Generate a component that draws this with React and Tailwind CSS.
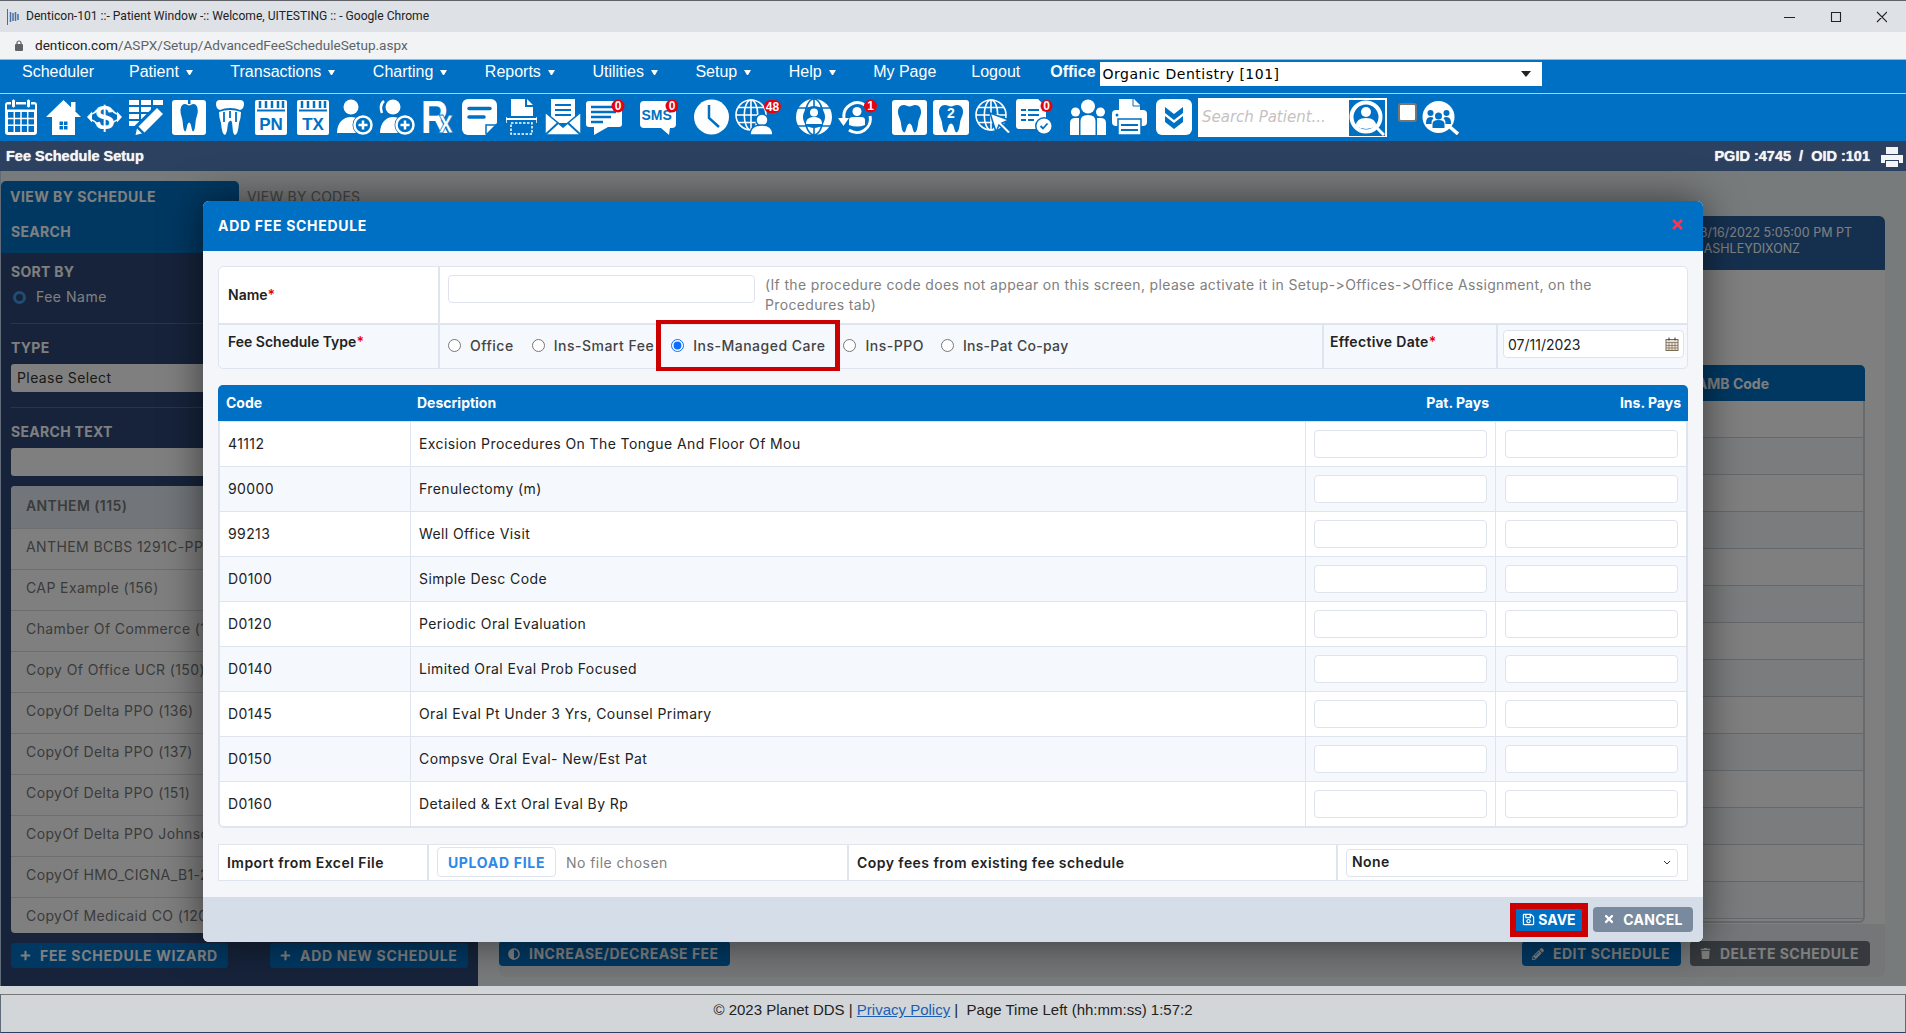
import { FaPlus, FaAdjust, FaPencilAlt, FaTrash, FaTimes, FaRegSave } from "react-icons/fa";

const BLUE = "#0070c4";
const TOOTH =
  "M6 2C2 2 0 5 0 9c0 4 2 6 3 11 .5 5 1.5 10 3.5 10C9 30 8.5 21 12 21s3 9 5.500 9c2 0 3-5 3.500-10 1-5 3-7 3-11 0-4-2-7-6-7-2.500 0-4 1.500-6 1.500S8.500 2 6 2Z";

const menuItems = [
  { label: "Scheduler" },
  { label: "Patient", caret: true },
  { label: "Transactions", caret: true },
  { label: "Charting", caret: true },
  { label: "Reports", caret: true },
  { label: "Utilities", caret: true },
  { label: "Setup", caret: true },
  { label: "Help", caret: true },
  { label: "My Page" },
  { label: "Logout" },
];

const feeRows = [
  ["41112", "Excision Procedures On The Tongue And Floor Of Mou"],
  ["90000", "Frenulectomy (m)"],
  ["99213", "Well Office Visit"],
  ["D0100", "Simple Desc Code"],
  ["D0120", "Periodic Oral Evaluation"],
  ["D0140", "Limited Oral Eval Prob Focused"],
  ["D0145", "Oral Eval Pt Under 3 Yrs, Counsel Primary"],
  ["D0150", "Compsve Oral Eval- New/Est Pat"],
  ["D0160", "Detailed & Ext Oral Eval By Rp"],
];

const scheduleList = [
  "ANTHEM BCBS 1291C-PPO (153)",
  "CAP Example (156)",
  "Chamber Of Commerce (140)",
  "Copy Of Office UCR (150)",
  "CopyOf Delta PPO (136)",
  "CopyOf Delta PPO (137)",
  "CopyOf Delta PPO (151)",
  "CopyOf Delta PPO Johnson (152)",
  "CopyOf HMO_CIGNA_B1-22 (149)",
  "CopyOf Medicaid CO (120)",
];

// toolbar icons, all white on the blue bar
function Ico({ w, className = "", children }) {
  return (
    <svg width={w} height="36" viewBox={`0 0 ${w} 36`} fill="#fff" className={`shrink-0 ${className}`}>
      {children}
    </svg>
  );
}

function Badge({ cx, cy = 7, r = 6.5, text }) {
  return (
    <g>
      <circle cx={cx} cy={cy} r={r} fill="#e8000f" />
      <text x={cx} y={cy + 4} textAnchor="middle" fontSize="12" fontWeight="700" fontFamily="Liberation Sans, sans-serif" fill="#fff">
        {text}
      </text>
    </g>
  );
}

function Globe({ cx, cy, r }) {
  return (
    <g fill="none" stroke="#fff" strokeWidth="1.6">
      <circle cx={cx} cy={cy} r={r} />
      <ellipse cx={cx} cy={cy} rx={r * 0.45} ry={r} />
      <path d={`M${cx} ${cy - r}V${cy + r}M${cx - r} ${cy}H${cx + r}M${cx - r * 0.85} ${cy - r * 0.5}H${cx + r * 0.85}M${cx - r * 0.85} ${cy + r * 0.5}H${cx + r * 0.85}`} />
    </g>
  );
}

function PlusRing({ cx, cy }) {
  return (
    <g>
      <circle cx={cx} cy={cy} r="10.500" fill={BLUE} />
      <circle cx={cx} cy={cy} r="8.500" fill={BLUE} stroke="#fff" strokeWidth="2.500" />
      <path d={`M${cx - 4.5} ${cy}H${cx + 4.5}M${cx} ${cy - 4.5}V${cy + 4.5}`} stroke="#fff" strokeWidth="2.500" />
    </g>
  );
}

function NotePad({ label }) {
  return (
    <>
      <rect x="0" y="1" width="32" height="35" rx="2" />
      <path d="M5 2v7M11 2v7M17 2v7M23 2v7M28 2v7" stroke={BLUE} strokeWidth="2.500" />
      <path d="M2 11.500H30" stroke={BLUE} strokeWidth="2" />
      <text x="16" y="31" textAnchor="middle" fontSize="17" fontWeight="700" fontFamily="Liberation Sans, sans-serif" fill={BLUE}>
        {label}
      </text>
    </>
  );
}

function Toolbar() {
  return (
    <div className="flex h-[47px] items-start bg-[#0070c4] pl-[4px] pt-[5px]">
      <Ico w={34}>
        <rect x="1" y="3" width="32" height="33" rx="3" />
        <rect x="3" y="5.500" width="28" height="5" fill={BLUE} />
        <rect x="7.500" y="0" width="4" height="9" rx="2" stroke={BLUE} />
        <rect x="22.500" y="0" width="4" height="9" rx="2" stroke={BLUE} />
        <path d="M4 13h26v20H4Z" fill={BLUE} />
        <path d="M10.300 13v20M17 13v20M23.700 13v20M4 19.500h26M4 26.200h26" stroke="#fff" strokeWidth="1.500" />
      </Ico>
      <Ico w={35} className="ml-[8px]">
        <rect x="25" y="3" width="4.500" height="9" />
        <path d="M17.500 1 35 18h-6v18H6V18H0Z" />
        <path d="M13.500 22.500h3.500v3.500h-3.500ZM18 22.500h3.500v3.500H18ZM13.500 27h3.500v3.500h-3.500ZM18 27h3.500v3.500H18Z" fill={BLUE} />
      </Ico>
      <Ico w={35} className="ml-[6px]">
        <path d="M0 18l5-5.500v11ZM35 18l-5-5.500v11Z" />
        <path d="M5 15q3-1 5-4M30 15q-3-1-5-4M5 21q3 1 5 4M30 21q-3 1-5 4" stroke="#fff" strokeWidth="1.800" fill="none" />
        <text x="17.500" y="30" textAnchor="middle" fontSize="34" fontWeight="700" fontFamily="Liberation Sans, sans-serif">$</text>
      </Ico>
      <Ico w={36} className="ml-[7px]">
        <path d="M0 1h10v5H0ZM12 1h10v5H12ZM24 1h10v5H24ZM0 8h10v5H0ZM12 8h10v5H12ZM24 8h5v5h-5ZM0 15h10v5H0ZM12 15h10v5H12ZM0 22h10v5H0ZM12 22h5v5h-5Z" />
        <path d="M8 33 31 10" stroke={BLUE} strokeWidth="12" />
        <path d="M9.500 27.500 28 9l6 6-18.500 18.500ZM8 29.500l5 5-6.500 1.500Z" />
      </Ico>
      <Ico w={34} className="ml-[7px]">
        <rect x="0" y="1" width="34" height="35" rx="3" />
        <rect x="16" y="0" width="2.500" height="5" fill={BLUE} />
        <g transform="translate(8.500 3) scale(0.72 0.98)" fill={BLUE}>
          <path d={TOOTH} />
        </g>
      </Ico>
      <Ico w={28} className="ml-[10px]">
        <path d="M4 1h20q4 0 4 4 0 5-4 6-4-2-10-2T4 11Q0 10 0 5q0-4 4-4Z" />
        <path d="M3 13q5-2 11-2t11 2q0 6-2 11-1 12-4 12-2 0-2.500-8T14 22q-2 0-2.500 6T9 36q-3 0-4-12-2-5-2-11Z" />
        <path d="M8 13v10M14 12v7M20 13v10" stroke={BLUE} strokeWidth="1.800" />
      </Ico>
      <Ico w={32} className="ml-[11px]"><NotePad label="PN" /></Ico>
      <Ico w={32} className="ml-[10px]"><NotePad label="TX" /></Ico>
      <Ico w={36} className="ml-[8px]">
        <circle cx="14" cy="8" r="7.500" />
        <path d="M0 34c0-10 6-16 14-16 7 0 12 4 14 10v6Z" />
        <PlusRing cx={26} cy={26} />
      </Ico>
      <Ico w={37} className="ml-[5px]">
        <circle cx="15" cy="8" r="7.500" />
        <path d="M2 34c0-10 6-16 13-16 7 0 12 4 14 10v6Z" />
        <path d="M6 2Q1 6 4 14" stroke="#fff" strokeWidth="2.500" fill="none" />
        <PlusRing cx={27} cy={26} />
      </Ico>
      <Ico w={33} className="ml-[6px]">
        <text transform="scale(0.8 1)" y="34" fontWeight="700" fontFamily="Liberation Sans, sans-serif" fontSize="47">
          R
          <tspan dx="-12" fontSize="33" stroke={BLUE} strokeWidth="0.800">x</tspan>
        </text>
      </Ico>
      <Ico w={35} className="ml-[8px]">
        <path d="M6 0h23a6 6 0 0 1 6 6v18L23 36H6a6 6 0 0 1-6-6V6a6 6 0 0 1 6-6Z" />
        <path d="M7 9.500h21M7 18h15" stroke={BLUE} strokeWidth="3.500" strokeLinecap="round" />
        <path d="M24 35V26h10" stroke={BLUE} strokeWidth="1.500" fill="none" />
      </Ico>
      <Ico w={31} className="ml-[9px]">
        <path d="M5 0h14v8h8v9H5ZM21 0l6 6h-6Z" />
        <rect x="0" y="19" width="31" height="2" />
        <path d="M0 18v6M31 18v6" stroke="#fff" strokeWidth="1.500" />
        <rect x="5" y="24" width="21" height="11" fill="none" stroke="#fff" strokeWidth="1.500" strokeDasharray="2.500 1.500" />
      </Ico>
      <Ico w={36} className="ml-[8px]">
        <rect x="6" y="0" width="24" height="24" />
        <path d="M10 6h16M10 11h16M10 16h16" stroke={BLUE} strokeWidth="2.200" />
        <path d="M0 13 18 28 36 13v23H0Z" stroke={BLUE} strokeWidth="1.500" />
        <path d="M0 36 13 24M36 36 23 24" stroke={BLUE} strokeWidth="2" />
      </Ico>
      <Ico w={39} className="ml-[5px]">
        <rect x="0" y="2" width="36" height="26" rx="3" />
        <path d="M8 28v8l14-8Z" />
        <path d="M5 8h25M5 13h25M5 18h20M5 23h12" stroke={BLUE} strokeWidth="2.500" />
        <Badge cx={32} text="0" />
      </Ico>
      <Ico w={38} className="ml-[15px]">
        <rect x="0" y="2" width="36" height="27" rx="4" />
        <path d="M21 29l8 7 1-7Z" />
        <text x="1.500" y="21" fontSize="14" fontWeight="700" fontFamily="Liberation Sans, sans-serif" fill={BLUE}>SMS</text>
        <Badge cx={32} text="0" />
      </Ico>
      <Ico w={35} className="ml-[16px]">
        <circle cx="17.500" cy="18" r="17.500" />
        <path d="M15 6v13l10 9" stroke={BLUE} strokeWidth="2.500" fill="none" />
      </Ico>
      <Ico w={46} className="ml-[6px]">
        <Globe cx={16} cy={16} r={15} />
        <circle cx="27" cy="21" r="6" stroke={BLUE} strokeWidth="1.500" />
        <path d="M15 36c0-7 5-10 12-10s11 3 11 10Z" stroke={BLUE} strokeWidth="1.500" />
        <rect x="29" y="1" width="17" height="13" rx="6.500" fill="#e8000f" />
        <text x="37.500" y="12" textAnchor="middle" fontSize="12" fontWeight="700" fontFamily="Liberation Sans, sans-serif">48</text>
      </Ico>
      <Ico w={36} className="ml-[15px]">
        <circle cx="18" cy="18" r="18" />
        <ellipse cx="18" cy="18" rx="9" ry="18" fill="none" stroke={BLUE} strokeWidth="1.600" />
        <path d="M18 0v36M1 9h34M1 27h34" stroke={BLUE} strokeWidth="1.600" />
        <circle cx="18" cy="18" r="11" fill={BLUE} />
        <circle cx="18" cy="13.500" r="4" />
        <path d="M10 25c0-5 3-7 8-7s8 2 8 7Z" />
      </Ico>
      <Ico w={39} className="ml-[6px]">
        <path d="M6 19A13.500 13.500 0 0 1 27 6M32 17A13.500 13.500 0 0 1 11 31" fill="none" stroke="#fff" strokeWidth="3" />
        <path d="M0 19h11l-5.500 8Z" />
        <circle cx="19" cy="12.500" r="4.500" />
        <path d="M11 26v-5q0-3 4-3h8q4 0 4 3v5q-8 3-16 0Z" />
        <Badge cx={32.500} text="1" />
      </Ico>
      <Ico w={35} className="ml-[15px]">
        <rect x="0" y="1" width="35" height="35" rx="3" />
        <g transform="translate(6 4) scale(0.96 0.98)" fill={BLUE}><path d={TOOTH} /></g>
      </Ico>
      <Ico w={36} className="ml-[6px]">
        <rect x="0" y="1" width="36" height="35" rx="3" />
        <g transform="translate(6 4) scale(1 0.98)" fill={BLUE}><path d={TOOTH} /></g>
        <text x="18" y="19" textAnchor="middle" fontSize="14" fontWeight="700" fontFamily="Liberation Sans, sans-serif">2</text>
      </Ico>
      <Ico w={36} className="ml-[6px]">
        <Globe cx={16} cy={16} r={15} />
        <path d="M15 15l19 7-7 3 9 9-3 2-9-9-3 7Z" stroke={BLUE} strokeWidth="1.500" transform="translate(0 -1)" />
      </Ico>
      <Ico w={37} className="ml-[5px]">
        <path d="M3 0h19l8 8v22H3a3 3 0 0 1-3-3V3a3 3 0 0 1 3-3Z" />
        <path d="M5 11h5M12 11h11M5 16h5M12 16h11M5 21h5M12 21h6" stroke={BLUE} strokeWidth="2" />
        <circle cx="28" cy="27" r="9" fill={BLUE} />
        <circle cx="28" cy="27" r="7.500" />
        <path d="M24.500 27l2.500 2.500 4.500-5" stroke={BLUE} strokeWidth="1.800" fill="none" />
        <Badge cx={30.500} cy={7} r={6} text="0" />
      </Ico>
      <Ico w={36} className="ml-[17px]">
        <circle cx="18" cy="7.500" r="7" />
        <circle cx="5.500" cy="13" r="4.500" />
        <circle cx="30.500" cy="13" r="4.500" />
        <path d="M10.500 36V22q0-6 7.500-6t7.500 6v14ZM0 36V24q0-5 5.500-5H9v17ZM36 36V24q0-5-5.500-5H27v17Z" />
      </Ico>
      <Ico w={35} className="ml-[6px]">
        <path d="M7 11V0h15l6 6v5Z" />
        <path d="M21 0v7h7" stroke={BLUE} fill="none" />
        <rect x="0" y="11" width="35" height="16" rx="4" />
        <circle cx="5" cy="16" r="1.500" fill={BLUE} />
        <rect x="6" y="20" width="23" height="16" stroke={BLUE} strokeWidth="1.500" />
        <path d="M9 26h17M9 31h17" stroke={BLUE} strokeWidth="2" />
      </Ico>
      <Ico w={36} className="ml-[9px]">
        <rect x="0" y="0" width="36" height="36" rx="6" />
        <path d="M9 8l9 7 9-7v6l-9 7-9-7ZM9 17l9 7 9-7v6l-9 7-9-7Z" fill={BLUE} />
      </Ico>
      <div className="ml-[6px] -mt-[1px] flex h-[39px] w-[189px] shrink-0 items-center bg-white pl-[4px] pr-[2px]">
        <input
          placeholder="Search Patient..."
          className="min-w-0 flex-1 bg-transparent font-['DejaVu_Sans',sans-serif] text-[15px] italic outline-none placeholder:text-[#c6c2c2]"
        />
        <svg width="36" height="36" viewBox="0 0 36 36" className="shrink-0 bg-[#0070c4]">
          <path d="M26 26l9 9" stroke="#fff" strokeWidth="3" />
          <circle cx="17" cy="17" r="14.500" fill={BLUE} stroke="#fff" strokeWidth="4" />
          <circle cx="17" cy="12" r="5" fill="#fff" stroke={BLUE} strokeWidth="0" />
          <path d="M7 26q0-8 10-8t10 8q-10 6-20 0Z" fill="#fff" />
        </svg>
      </div>
      <div className="ml-[11px] mt-[4px] h-[19px] w-[19px] shrink-0 rounded-[3px] border-2 border-[#767676] bg-white" />
      <Ico w={37} className="ml-[5px]">
        <path d="M28 28l8 7" stroke="#fff" strokeWidth="3.500" />
        <circle cx="16.500" cy="18" r="16" />
        <g fill={BLUE}>
          <circle cx="8.500" cy="14" r="3" />
          <circle cx="24.500" cy="14" r="3" />
          <circle cx="16.500" cy="17" r="3.500" />
          <path d="M4 24q0-6 4.500-6 2 0 3 1-2 2-2 6H4ZM29 24q0-6-4.500-6-2 0-3 1 2 2 2 6H29ZM10.500 29v-4q0-4 6-4t6 4v4Z" />
        </g>
      </Ico>
    </div>
  );
}

function Sidebar() {
  return (
    <div className="flex w-[477px] shrink-0 flex-col pt-[10px] font-['Inter',sans-serif] text-[14px]">
      <div className="flex h-[39px] items-center">
        <div className="flex h-full w-[238px] rounded-t-[5px] bg-[#0070c4] pl-[9px] pt-[5px] font-bold tracking-[0.45px] text-white">
          VIEW BY SCHEDULE
        </div>
        <div className="pb-[9px] pl-[8px] tracking-[0.2px] text-[#8a8a8a]">VIEW BY CODES</div>
      </div>
      <div className="flex h-[33px] bg-[#0070c4] pl-[10px] pt-[1px] font-bold tracking-[0.3px] text-white">SEARCH</div>
      <div className="flex flex-1 flex-col bg-[#2c4674] px-[10px] text-white">
        <div className="mt-[11px] font-bold leading-[16px] tracking-[0.3px]">SORT BY</div>
        <div className="mt-[8px] flex items-center gap-[10px] leading-[18px] tracking-[0.5px]">
          <span className="ml-[2px] h-[13px] w-[13px] rounded-full border-[3px] border-[#3f9be8]" />
          Fee Name
        </div>
        <div className="mt-[17px] border-t border-white/20" />
        <div className="mt-[16px] font-bold leading-[16px] tracking-[0.3px]">TYPE</div>
        <div className="mt-[8px] flex h-[28px] items-center rounded-[3px] bg-white pb-[2px] pl-[6px] tracking-[0.4px] text-[#333]">Please Select</div>
        <div className="mt-[15px] border-t border-white/20" />
        <div className="mt-[16px] font-bold leading-[16px] tracking-[0.3px]">SEARCH TEXT</div>
        <div className="mt-[8px] h-[28px] rounded-[3px] bg-white" />
        <div className="mt-[10px] flex h-[447px] flex-col overflow-hidden rounded-[4px] bg-white tracking-[0.4px] text-[#777]">
          <div className="flex h-[42px] shrink-0 items-center bg-[#e4ecf4] pb-[3px] pl-[15px] font-semibold">ANTHEM (115)</div>
          {scheduleList.map((item) => (
            <div key={item} className="flex h-[41px] shrink-0 items-center border-t border-[#ddd] pb-[5px] pl-[15px]">{item}</div>
          ))}
        </div>
        <div className="mt-[10px] flex justify-between tracking-[0.7px]">
          <div className="flex h-[25px] w-[217px] items-center gap-[9px] rounded-[3px] bg-[#0070c4] pb-[1px] pl-[9px] font-bold">
            <FaPlus className="text-[11px]" /> FEE SCHEDULE WIZARD
          </div>
          <div className="flex h-[25px] w-[198px] items-center gap-[9px] rounded-[3px] bg-[#0070c4] pb-[1px] pl-[10px] font-bold">
            <FaPlus className="text-[11px]" /> ADD NEW SCHEDULE
          </div>
        </div>
      </div>
    </div>
  );
}

function RightPanel() {
  return (
    <div className="flex min-w-0 flex-1 flex-col pb-[9px] pl-[21px] pr-[21px] pt-[45px] font-['Inter',sans-serif]">
      <div className="flex flex-1 flex-col overflow-hidden rounded-[6px] bg-white">
        <div className="flex h-[54px] shrink-0 flex-col items-end justify-center bg-[#2a609e] pb-[4px] text-[12.500px] leading-[16px] text-white">
          <span className="pr-[33px]">3/16/2022 5:05:00 PM PT</span>
          <span className="pr-[85px]">ASHLEYDIXONZ</span>
        </div>
        <div className="pr-[20px] pt-[95px]">
          <div className="flex h-[36px] items-center justify-end rounded-t-[5px] bg-[#0070c4] pr-[96px] text-[14px] font-bold text-white">AMB Code</div>
          <div className="h-[522px] rounded-b-[6px] border-x-2 border-b-2 border-[#cfd6dc]">
            {Array.from({ length: 14 }, (_, i) => (
              <div key={i} className={`h-[37px] border-b border-[#ccd2d8] ${i % 2 ? "bg-[#f4f8fb]" : "bg-white"}`} />
            ))}
          </div>
        </div>
        <div className="mt-auto flex items-center bg-[#e9edf0] pb-[11px] pr-[15px] pt-[17px] text-[14px] font-bold tracking-[0.5px] text-white">
          <div className="flex h-[25px] w-[231px] items-center gap-[9px] rounded-[4px] bg-[#0070c4] pl-[9px]">
            <FaAdjust className="text-[12px]" /> INCREASE/DECREASE FEE
          </div>
          <div className="ml-auto flex h-[25px] w-[159px] items-center gap-[9px] rounded-[4px] bg-[#0070c4] pl-[10px]">
            <FaPencilAlt className="text-[12px]" /> EDIT SCHEDULE
          </div>
          <div className="ml-[9px] flex h-[25px] w-[180px] items-center gap-[9px] rounded-[4px] bg-[#6c757d] pl-[10px]">
            <FaTrash className="text-[11px]" /> DELETE SCHEDULE
          </div>
        </div>
      </div>
    </div>
  );
}

function Radio({ label, checked }) {
  return (
    <label className="flex items-center gap-[9px]">
      <input type="radio" name="feeType" defaultChecked={checked} className="m-0 h-[13px] w-[13px] accent-[#0d6efd]" />
      <span>{label}</span>
    </label>
  );
}

function FeeModal() {
  return (
    <div className="absolute left-[202px] top-[30px] flex h-[741px] w-[1500px] flex-col overflow-hidden rounded-[6px] bg-[#f4f6f9] font-['Inter',sans-serif] text-[14px] text-[#222] shadow-[0_0_40px_rgba(0,0,0,0.55)]">
      <div className="flex h-[50px] shrink-0 items-center justify-between bg-[#0070c4] pb-[2px] pl-[15px] pr-[18px]">
        <span className="font-bold tracking-[0.7px] text-white">ADD FEE SCHEDULE</span>
        <FaTimes className="-mt-[1px] text-[15px] text-[#ee3a55]" />
      </div>

      <div className="flex-1 px-[15px] pt-[15px]">
        <div className="rounded-[5px] border border-[#dfe5ee]">
          <div className="flex h-[56px] rounded-t-[5px] bg-white">
            <div className="flex w-[221px] shrink-0 items-center border-r-2 border-[#dfe5ee] pb-[2px] pl-[9px] font-semibold">
              Name<span className="text-[#e8000f]">*</span>
            </div>
            <div className="flex flex-1 gap-[10px] pl-[8px] pt-[8px]">
              <div className="h-[28px] w-[307px] shrink-0 rounded-[4px] border border-[#dfe3ee] bg-white" />
              <p className="w-[850px] leading-[20px] tracking-[0.35px] text-[#808080]">
                (If the procedure code does not appear on this screen, please activate it in Setup-&gt;Offices-&gt;Office Assignment, on the Procedures tab)
              </p>
            </div>
          </div>
          <div className="flex h-[45px] rounded-b-[5px] border-t-2 border-[#dfe5ee] bg-[#f5f9fd]">
            <div className="w-[221px] shrink-0 border-r-2 border-[#dfe5ee] pl-[9px] pt-[6px] font-semibold">
              Fee Schedule Type<span className="text-[#e8000f]">*</span>
            </div>
            <div className="flex flex-1 items-center pb-[2px] pl-[8px] font-medium tracking-[0.5px] text-[#444]">
              <Radio label="Office" />
              <div className="ml-[18px]"><Radio label="Ins-Smart Fee" /></div>
              <div className="relative z-10 -mt-[5px] ml-[2px] flex h-[51px] shrink-0 items-center self-start border-x-[5px] border-y-4 border-[#cc0000] px-[10px]">
                <Radio label="Ins-Managed Care" checked />
              </div>
              <div className="ml-[3px]"><Radio label="Ins-PPO" /></div>
              <div className="ml-[17px] tracking-[0.3px]"><Radio label="Ins-Pat Co-pay" /></div>
            </div>
            <div className="w-[176px] shrink-0 border-x-2 border-[#dfe5ee] pl-[6px] pt-[6px] font-semibold tracking-[0.3px]">
              Effective Date<span className="text-[#e8000f]">*</span>
            </div>
            <div className="w-[189px] shrink-0 pl-[5px] pt-[5px]">
              <div className="flex h-[28px] w-[181px] items-center justify-between rounded-[4px] border border-[#dfe3ee] bg-white pl-[4px] pr-[4px]">
                07/11/2023
                <svg width="14" height="14" viewBox="0 0 14 14" fill="none" stroke="#7b6a55">
                  <rect x="1" y="2.500" width="12" height="11" fill="#e8e2d6" />
                  <path d="M1 5.500h12M1 8.500h12M1 11h12M4 5v9M7 5v9M10 5v9" strokeWidth="0.700" />
                  <path d="M4 0.500v3M10 0.500v3" stroke="#334" />
                </svg>
              </div>
            </div>
          </div>
        </div>

        <div className="mt-[16px] grid h-[36px] grid-cols-[199px_1fr_170px_192px] items-center rounded-t-[5px] bg-[#0070c4] pb-[2px] font-bold text-white">
          <span className="pl-[8px]">Code</span>
          <span>Description</span>
          <span className="pr-[7px] text-right">Pat. Pays</span>
          <span className="pr-[7px] text-right">Ins. Pays</span>
        </div>
        <div className="overflow-hidden rounded-b-[6px] border-x-2 border-b-2 border-t border-[#dfe5ee] tracking-[0.4px]">
          {feeRows.map(([code, desc], i) => (
            <div
              key={code}
              className={`grid grid-cols-[191px_895px_190px_1fr] items-stretch border-[#dfe5ee] ${i % 2 ? "bg-[#f5f9fd]" : "bg-white"} ${i < feeRows.length - 1 ? "h-[45px] border-b" : "h-[44px]"}`}
            >
              <div className="flex items-center border-r border-[#dfe5ee] pb-[2px] pl-[8px]">{code}</div>
              <div className="flex items-center border-r border-[#dfe5ee] pb-[2px] pl-[8px]">{desc}</div>
              <div className="flex items-center border-r border-[#dfe5ee] pl-[8px]">
                <div className="h-[28px] w-[173px] rounded-[4px] border border-[#dfe3ee] bg-white" />
              </div>
              <div className="flex items-center pl-[9px]">
                <div className="h-[28px] w-[173px] rounded-[4px] border border-[#dfe3ee] bg-white" />
              </div>
            </div>
          ))}
        </div>

        <div className="mt-[16px] flex h-[37px] border border-[#dfe5ee] bg-white tracking-[0.45px]">
          <div className="flex w-[210px] shrink-0 items-center border-r-2 border-[#dfe5ee] pb-[1px] pl-[8px] font-semibold">Import from Excel File</div>
          <div className="flex w-[420px] shrink-0 items-center border-r-2 border-[#dfe5ee] pb-[1px] pl-[8px] text-[#808080]">
            <div className="mr-[10px] flex h-[30px] w-[119px] items-center justify-center rounded-[4px] border border-[#dfe3ee] font-bold tracking-[0.7px] text-[#2d88e8]">UPLOAD FILE</div>
            No file chosen
          </div>
          <div className="flex flex-1 items-center border-r-2 border-[#dfe5ee] pb-[1px] pl-[8px] font-semibold">Copy fees from existing fee schedule</div>
          <div className="flex w-[349px] shrink-0 items-center pl-[8px]">
            <div className="flex h-[28px] w-[332px] items-center justify-between rounded-[4px] border border-[#dfe3ee] pl-[5px] pr-[6px] font-semibold">
              <span className="-mt-[2px]">None</span>
              <svg width="8" height="5" viewBox="0 0 8 5" fill="none" stroke="#333"><path d="M1 1l3 3 3-3" /></svg>
            </div>
          </div>
        </div>
      </div>

      <div className="flex h-[45px] shrink-0 items-center justify-end bg-[#d5dee8] pr-[10px] font-bold text-white">
        <div className="flex h-[34px] w-[78px] items-center justify-center gap-[3px] border-[6px] border-[#cc0000] bg-[#0070c4] pb-[1px]">
          <FaRegSave className="text-[13px]" /> SAVE
        </div>
        <div className="ml-[5px] flex h-[25px] w-[100px] items-center justify-center gap-[8px] rounded-[4px] bg-[#7a8a9e] pb-[1px] tracking-[0.3px]">
          <FaTimes className="text-[12px]" /> CANCEL
        </div>
      </div>
    </div>
  );
}

export default function App() {
  return (
    <div className="flex h-[1033px] w-[1906px] flex-col overflow-hidden bg-[#d2d6d8] font-['Liberation_Sans',sans-serif]">
      {/* Chrome window bars */}
      <div className="flex h-[32px] shrink-0 items-center border-t border-[#5f6368] bg-[#dee1e6] pl-[7px] pr-[19px] font-['Roboto',sans-serif] text-[12.100px] text-[#222]">
        <svg width="12" height="16" viewBox="0 0 12 16" className="mr-[7px] shrink-0">
          <path d="M0.500 0v16" stroke="#1a73e8" strokeWidth="1" />
          <path d="M3.500 3v10M6 4v8M8.500 3v9M11 5v6" stroke="#4a6fa5" strokeWidth="1.500" />
        </svg>
        Denticon-101 ::- Patient Window -:: Welcome, UITESTING :: - Google Chrome
        <svg width="103" height="12" viewBox="0 0 103 12" fill="none" stroke="#222" className="ml-auto">
          <path d="M0 6.500h11M47.500 1.500h9v9h-9ZM93 1l10 10M103 1 93 11" strokeWidth="1.100" />
        </svg>
      </div>
      <div className="flex h-[28px] shrink-0 items-center border-b border-[#b0b3b6] bg-[#f1f3f4] pl-[15px] font-['Roboto',sans-serif] text-[13.600px]">
        <svg width="8" height="11" viewBox="0 0 8 11" fill="#5f6368" className="mr-[12px] shrink-0">
          <rect x="0" y="4" width="8" height="7" rx="1" />
          <path d="M2 4.500V3a2 2 0 0 1 4 0v1.500" fill="none" stroke="#5f6368" strokeWidth="1.200" />
        </svg>
        <span className="text-[#202124]">denticon.com</span>
        <span className="text-[#5f6368]">/ASPX/Setup/AdvancedFeeScheduleSetup.aspx</span>
      </div>

      {/* Menu bar */}
      <div className="flex h-[34px] shrink-0 items-start border-b border-[#a9d0ec] bg-[#0070c4] pl-[22px] text-[16px] text-white">
        <div className="flex items-center gap-[35px] pt-[3px] leading-[18px]">
          {menuItems.map((item) => (
            <div key={item.label} className="flex items-center">
              {item.label}
              {item.caret && <span className="ml-[7px] mr-[2.500px] w-[7px] border-x-[3.500px] border-t-[5px] border-x-transparent border-t-white" />}
            </div>
          ))}
        </div>
        <span className="ml-[30px] pt-[3px] font-bold leading-[18px]">Office</span>
        <div className="ml-[4px] mt-[2px] flex h-[24px] w-[442px] items-center justify-between bg-white pl-[3px] pr-[11px] font-['DejaVu_Sans',sans-serif] text-[14px] tracking-[0.5px] text-black">
          Organic Dentistry [101]
          <span className="h-0 w-0 border-x-[5px] border-t-[6px] border-x-transparent border-t-[#222]" />
        </div>
      </div>

      <Toolbar />

      {/* Page title */}
      <div className="flex h-[30px] shrink-0 items-center bg-[#2c4160] pl-[6px] pr-[3px] pt-[2px] text-[14.500px] font-bold text-[#f4f4f4] [text-shadow:0_0_1px_#fff]">
        Fee Schedule Setup
        <span className="ml-auto">PGID :4745&nbsp; /&nbsp; OID :101</span>
        <svg width="22" height="20" viewBox="0 0 22 20" fill="#f4f4f4" className="ml-[11px]">
          <path d="M5 0h12v7H5ZM0 8h22v8h-4v-3H4v3H0ZM5 14h12v6H5Z" />
        </svg>
      </div>

      {/* Dimmed page with the dialog on top */}
      <div className="relative flex h-[815px] shrink-0 border-l border-[#5f6b78] bg-[#f0f6f8]">
        <Sidebar />
        <RightPanel />
        <div className="absolute inset-0 bg-black/50" />
        <FeeModal />
      </div>

      {/* Footer */}
      <div className="mt-[8px] flex flex-1 items-center justify-center border border-x-[#5f6b78] border-b-[#2c4160] border-t-[#777] pb-[6px] text-[15px] text-[#222]">
        © 2023 Planet DDS |&nbsp;<span className="text-[#1a5fb4] underline">Privacy Policy</span>&nbsp;|&nbsp; Page Time Left (hh:mm:ss) 1:57:2
      </div>
    </div>
  );
}
